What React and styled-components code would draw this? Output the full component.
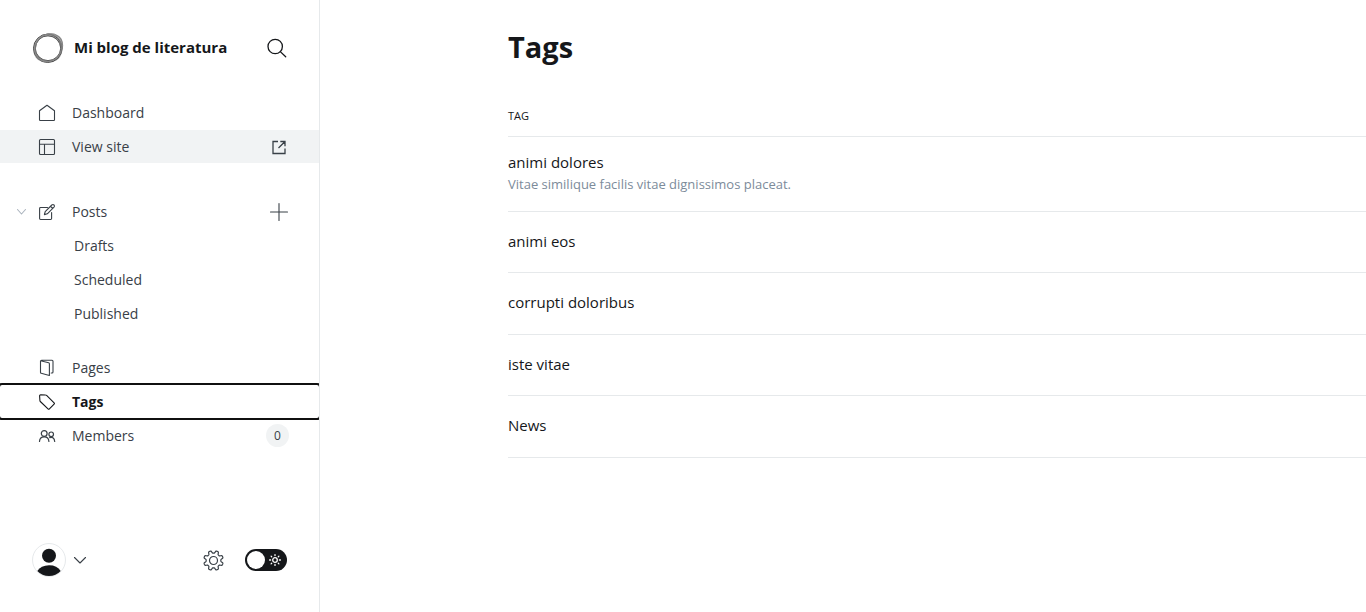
import React from "react";
import styled, { createGlobalStyle } from "styled-components";

const Global = createGlobalStyle`
  *, *::before, *::after { box-sizing: border-box; }
  body {
    margin: 0;
    background: #fff;
    color: #15171a;
    font-family: "Open Sans", "Noto Sans", sans-serif;
    font-size: 14px;
    overflow-x: hidden;
  }
  a { color: inherit; text-decoration: none; }
  button { margin: 0; padding: 0; border: 0; background: none; color: inherit; font: inherit; cursor: pointer; }
  ul { margin: 0; padding: 0; list-style: none; }
  svg { display: block; flex: none; overflow: visible; }
`;

const Viewport = styled.div`
  display: flex;
  min-height: 100vh;
`;

const Sidebar = styled.aside`
  display: flex;
  flex-direction: column;
  flex: 0 0 320px;
  overflow: hidden;
  border-right: 1px solid #e6e9eb;
`;

const SidebarHeader = styled.header`
  display: flex;
  align-items: center;
  gap: 10px;
  padding: 32px;
`;

const SiteTitle = styled.span`
  flex: 1;
  padding-bottom: 2px;
  font-size: 15px;
  line-height: 30px;
  font-weight: 700;
  color: #15171a;
  white-space: nowrap;
`;

const IconButton = styled.button`
  display: flex;
  align-items: center;
  justify-content: center;
  color: ${(p) => p.$color || "#15171a"};
`;

const Nav = styled.nav`
  flex: 1;
`;

const NavGroup = styled.ul`
  display: flex;
  flex-direction: column;
  gap: 1px;
  margin-bottom: ${(p) => (p.$wide ? "32px" : "21px")};
`;

const NavItem = styled.li`
  position: relative;
  display: flex;
  align-items: center;
`;

const NavLink = styled.a`
  display: flex;
  flex: 1;
  align-items: center;
  gap: 16px;
  height: 33px;
  padding: 0 32px 0 38px;
  font-size: 14px;
  font-weight: ${(p) => (p.$active ? 700 : 400)};
  color: ${(p) => (p.$active ? "#15171a" : "#394047")};
  background: ${(p) => (p.$highlight ? "#f1f3f4" : "transparent")};
  outline: ${(p) => (p.$active ? "2px solid #101010" : "none")};
  border-radius: ${(p) => (p.$active ? "2px" : "0")};
`;

const NavLabel = styled.span`
  flex: 1;
`;

const SubLink = styled.a`
  display: block;
  flex: 1;
  padding-left: 74px;
  line-height: 33px;
  color: #394047;
`;

const RowAction = styled.span`
  position: absolute;
  top: 0;
  bottom: 0;
  left: ${(p) => p.$left};
  display: flex;
  align-items: center;
`;

const Count = styled.span`
  min-width: 23px;
  margin-right: -2px;
  border-radius: 12px;
  background: #f1f3f4;
  color: #394047;
  font-size: 12px;
  line-height: 23px;
  text-align: center;
`;

const SidebarFooter = styled.footer`
  display: flex;
  align-items: center;
  justify-content: space-between;
  padding: 0 32px 35px;
`;

const UserButton = styled.button`
  display: flex;
  align-items: center;
  gap: 8px;
  color: #394047;
`;

const Tools = styled.div`
  display: flex;
  align-items: center;
  gap: 21px;
`;

const Switch = styled.label`
  position: relative;
  display: flex;
  align-items: center;
  justify-content: space-between;
  width: 42px;
  height: 22px;
  padding: 0 6px 0 2px;
  border-radius: 11px;
  background: #15171a;
  color: #fff;
  cursor: pointer;
`;

const SwitchInput = styled.input`
  position: absolute;
  inset: 0;
  width: 100%;
  height: 100%;
  margin: 0;
  opacity: 0;
`;

const Knob = styled.span`
  width: 18px;
  height: 18px;
  border-radius: 50%;
  background: #fff;
`;

const Main = styled.main`
  flex: 1;
  min-width: 0;
  padding: 23px 0 48px 188px;
`;

const Title = styled.h1`
  margin: 0;
  font-size: 29px;
  line-height: 48px;
  font-weight: 700;
`;

const TagTable = styled.table`
  width: 100%;
  margin-top: 24px;
  border-collapse: collapse;
  text-align: left;
`;

const HeadCell = styled.th`
  height: 41px;
  padding: 0;
  border-bottom: 1px solid #e6e9eb;
  font-size: 11px;
  font-weight: 400;
  text-transform: uppercase;
`;

const TagRow = styled.tr`
  height: 62px;
  border-bottom: 1px solid #e6e9eb;

  &:nth-child(even) {
    height: 61px;
  }
`;

const TagCell = styled.td`
  padding: 14px 0 16px;
`;

const TagName = styled.a`
  display: block;
  font-size: 15px;
  line-height: 22px;
  font-weight: 500;
`;

const TagDescription = styled.p`
  margin: 0;
  font-size: 13px;
  line-height: 22px;
  color: #7c8b9a;
`;

function Icon({ w = 18, h = 18, children, width = 1.1, ...rest }) {
  return (
    <svg
      width={w}
      height={h}
      viewBox={`0 0 ${w} ${h}`}
      fill="none"
      stroke="currentColor"
      strokeWidth={width}
      strokeLinecap="round"
      strokeLinejoin="round"
      aria-hidden="true"
      {...rest}
    >
      {children}
    </svg>
  );
}

const Logo = () => (
  <svg width="32" height="32" viewBox="0 0 32 32" fill="none" aria-hidden="true">
    <path
      fillRule="evenodd"
      fill="#a9a9a9"
      d="M14.500 1.800C20 .6 27 2 29.500 6.500C32 12 31 22 27 26.500C22.500 31 11 32 5.500 27.500C0 23 .3 13 4.500 8C7.500 4.500 11 2.500 14.500 1.800ZM16 4.200C9.500 3.800 3.800 9.500 3.700 16C3.600 23 9.500 28.300 16 28.200C23 28 28 23 28.200 16.500C28.400 10 23 4.600 16 4.200Z"
    />
    <circle cx="15.700" cy="16.300" r="14.200" stroke="#4a4a4a" strokeWidth="1" />
    <ellipse cx="16" cy="16.200" rx="12.700" ry="12.400" stroke="#4c4c4c" strokeWidth=".9" />
    <ellipse cx="17" cy="15.500" rx="14.600" ry="12.900" transform="rotate(-48 17 15.500)" stroke="#777" strokeWidth=".8" />
    <ellipse cx="16" cy="16" rx="13.200" ry="14.300" transform="rotate(35 16 16)" stroke="#888" strokeWidth=".8" />
  </svg>
);

const SearchIcon = () => (
  <Icon w={20} h={20} width={1.3}>
    <circle cx="8.200" cy="8.500" r="7.200" />
    <path d="M13.300 13.600 18.700 18.700" />
  </Icon>
);

const HomeIcon = () => (
  <Icon>
    <path d="M1.500 6.800 9 1.200l7.500 5.600V15.800q0 .7-.7.7H2.200q-.7 0-.7-.7Z" />
  </Icon>
);

const LayoutIcon = () => (
  <Icon>
    <rect x="1.500" y="1.500" width="15" height="15" rx="1" />
    <path d="M1.500 6.200h15M6.500 6.200v10.300" />
  </Icon>
);

const ExternalIcon = () => (
  <Icon w={16} h={16} width={1.3} strokeLinecap="butt" strokeLinejoin="miter">
    <path d="M7 2.500H2v12h12V9.500M7.500 9l6-6M9.300 2.500h4.700v4.700" />
  </Icon>
);

const PlusIcon = () => (
  <Icon>
    <path d="M9 .5v17M.5 9h17" />
  </Icon>
);

const PenIcon = () => (
  <Icon>
    <path d="M9.500 4.500H2.500q-.9 0-.9.900v10.200q0 .9.900.9h10.200q.9 0 .9-.9V9.500" />
    <path d="m7.200 8.700 6.600-6.700q1.200-1 2.200 0t0 2.200L9.300 10.800l-2.900.8ZM12.600 3.300l2.200 2.200" />
  </Icon>
);

const PagesIcon = () => (
  <Icon>
    <path d="M2.500 1.700 10.700 3.800q.7.200.7.900v11.800L3.200 14.300q-.7-.2-.7-.9ZM3.500 1.300H14q1 0 1 1V13q0 1-1 1h-.8" />
  </Icon>
);

const TagIcon = () => (
  <Icon>
    <path d="M1.600 2.800q0-1 1-1L7.600 2q.6 0 1 .4l7.500 7.400q.7.700 0 1.400l-4.700 4.700q-.7.700-1.400 0L2.300 8.500q-.4-.4-.4-1Z" />
  </Icon>
);

const MembersIcon = () => (
  <Icon width={1.2}>
    <circle cx="6.200" cy="6.500" r="2.900" />
    <path d="M1.500 14.500q.2-4.700 4.700-4.700t4.700 4.700" />
    <circle cx="13.200" cy="7.300" r="2.300" />
    <path d="M11.700 10.600q4.600-1.200 5 3.900" />
  </Icon>
);

const Chevron = ({ w, h }) => (
  <Icon w={w} h={h}>
    <path d={`M.5 .5 ${w / 2} ${h - 1} ${w - 0.5} .5`} />
  </Icon>
);

const Avatar = () => (
  <svg width="34" height="34" viewBox="0 0 34 34" aria-hidden="true">
    <circle cx="17" cy="17" r="16.500" fill="#fff" stroke="#e6e9eb" />
    <circle cx="17" cy="12.700" r="7" fill="#15171a" />
    <path d="M5.300 28Q9 22.300 17 22.200T28.700 28Q24 33 17 33T5.300 28Z" fill="#15171a" />
  </svg>
);

const GEAR = (() => {
  const points = [];
  const steps = 160;
  for (let i = 0; i < steps; i++) {
    const a = (i / steps) * Math.PI * 2;
    const wave = Math.tanh(2.2 * Math.cos(8 * (a - Math.PI / 8)));
    const r = 8.6 + 1.3 * wave;
    points.push(`${(10.5 + r * Math.cos(a + Math.PI / 8)).toFixed(2)} ${(10.5 + r * Math.sin(a + Math.PI / 8)).toFixed(2)}`);
  }
  return `M${points.join("L")}Z`;
})();

const GearIcon = () => (
  <Icon w={21} h={21} width={1.2}>
    <path d={GEAR} transform="rotate(22.5 10.500 10.500)" />
    <circle cx="10.500" cy="10.500" r="4" />
  </Icon>
);

const SunIcon = () => (
  <Icon w={12} h={12} width={1.3}>
    <circle cx="6" cy="6" r="2.300" />
    <path d="M6 .6v1M6 10.400v1M.6 6h1M10.400 6h1M2.100 2.100l.6.6M9.300 9.300l.6.6M2.100 9.900l.6-.6M9.300 2.700l.6-.6" />
  </Icon>
);

const SUB_VIEWS = ["Drafts", "Scheduled", "Published"];

const TAGS = [
  { name: "animi dolores", description: "Vitae similique facilis vitae dignissimos placeat." },
  { name: "animi eos" },
  { name: "corrupti doloribus" },
  { name: "iste vitae" },
  { name: "News" },
];

export default function App() {
  return (
    <>
      <Global />
      <Viewport>
        <Sidebar>
          <SidebarHeader>
            <Logo />
            <SiteTitle>Mi blog de literatura</SiteTitle>
            <IconButton type="button" aria-label="Search">
              <SearchIcon />
            </IconButton>
          </SidebarHeader>
          <Nav>
            <NavGroup $wide>
              <NavItem>
                <NavLink href="#dashboard">
                  <HomeIcon />
                  <NavLabel>Dashboard</NavLabel>
                </NavLink>
              </NavItem>
              <NavItem>
                <NavLink href="#site" $highlight>
                  <LayoutIcon />
                  <NavLabel>View site</NavLabel>
                  <ExternalIcon />
                </NavLink>
              </NavItem>
            </NavGroup>
            <NavGroup>
              <NavItem>
                <NavLink href="#posts">
                  <PenIcon />
                  <NavLabel>Posts</NavLabel>
                </NavLink>
                <RowAction $left="17px">
                  <IconButton type="button" aria-label="Collapse posts" $color="#abb4be">
                    <Chevron w={9} h={6} />
                  </IconButton>
                </RowAction>
                <RowAction $left="270px">
                  <IconButton type="button" aria-label="New post" $color="#394047">
                    <PlusIcon />
                  </IconButton>
                </RowAction>
              </NavItem>
              {SUB_VIEWS.map((view) => (
                <NavItem key={view}>
                  <SubLink href={`#${view.toLowerCase()}`}>{view}</SubLink>
                </NavItem>
              ))}
            </NavGroup>
            <NavGroup>
              <NavItem>
                <NavLink href="#pages">
                  <PagesIcon />
                  <NavLabel>Pages</NavLabel>
                </NavLink>
              </NavItem>
              <NavItem>
                <NavLink href="#tags" $active aria-current="page">
                  <TagIcon />
                  <NavLabel>Tags</NavLabel>
                </NavLink>
              </NavItem>
              <NavItem>
                <NavLink href="#members">
                  <MembersIcon />
                  <NavLabel>Members</NavLabel>
                  <Count>0</Count>
                </NavLink>
              </NavItem>
            </NavGroup>
          </Nav>
          <SidebarFooter>
            <UserButton type="button" aria-label="Account menu">
              <Avatar />
              <Chevron w={12} h={7} />
            </UserButton>
            <Tools>
              <IconButton type="button" aria-label="Settings" $color="#394047">
                <GearIcon />
              </IconButton>
              <Switch>
                <SwitchInput type="checkbox" aria-label="Night mode" />
                <Knob />
                <SunIcon />
              </Switch>
            </Tools>
          </SidebarFooter>
        </Sidebar>
        <Main>
          <Title>Tags</Title>
          <TagTable>
            <thead>
              <tr>
                <HeadCell scope="col">Tag</HeadCell>
              </tr>
            </thead>
            <tbody>
              {TAGS.map((tag) => (
                <TagRow key={tag.name}>
                  <TagCell>
                    <TagName href="#tag">{tag.name}</TagName>
                    {tag.description && <TagDescription>{tag.description}</TagDescription>}
                  </TagCell>
                </TagRow>
              ))}
            </tbody>
          </TagTable>
        </Main>
      </Viewport>
    </>
  );
}
